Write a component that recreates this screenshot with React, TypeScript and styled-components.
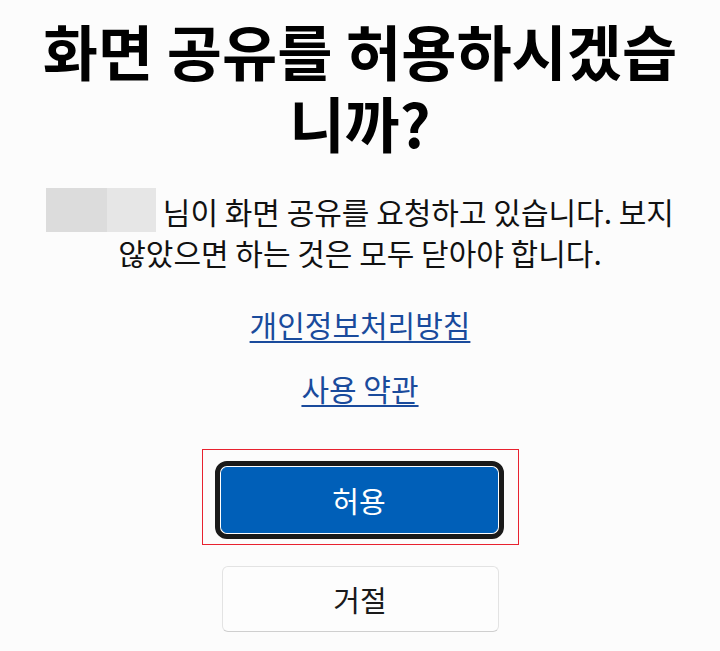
import React from "react";
import styled, { createGlobalStyle } from "styled-components";

const Global = createGlobalStyle`
  html, body { margin: 0; padding: 0; background: #fcfcfc; }
  body { font-family: "Noto Sans CJK KR", "Noto Sans", sans-serif; color: #000; }
`;

const Page = styled.main`
  display: flex;
  flex-direction: column;
  align-items: center;
  padding: 14px 24px 0;
  box-sizing: border-box;
  width: 720px;
`;

const Title = styled.h1`
  margin: 0;
  font-size: 60px;
  font-weight: 700;
  line-height: 72px;
  text-align: center;
  width: 672px;
`;

const Description = styled.p`
  margin: 30px 0 0;
  max-width: 640px;
  font-size: 30px;
  line-height: 40px;
  text-align: center;
  color: #111;
`;

const Placeholder = styled.span`
  display: inline-flex;
  vertical-align: -8px;
`;

const Block = styled.span<{ $w: number; $c: string }>`
  display: inline-block;
  width: ${(p) => p.$w}px;
  height: 44px;
  background: ${(p) => p.$c};
`;

const Links = styled.nav`
  display: flex;
  flex-direction: column;
  align-items: center;
  gap: 24px;
  margin-top: 32px;
`;

const Link = styled.a`
  font-size: 30px;
  line-height: 40px;
  color: #1a4b9c;
  text-decoration: underline;
  text-underline-offset: 4px;
  text-decoration-thickness: 2px;
`;

const Highlight = styled.div`
  margin-top: 41px;
  border: 1px solid #e8222f;
  padding: 11px 14px 5px 12px;
`;

const FocusRing = styled.div`
  border: 5px solid #1a1a1a;
  border-radius: 12px;
  padding: 1px;
  background: #fff;
`;

const Button = styled.button<{ $primary?: boolean }>`
  display: flex;
  align-items: center;
  justify-content: center;
  width: 277px;
  height: 66px;
  box-sizing: border-box;
  border-radius: 6px;
  font-family: "Noto Sans CJK KR", "Noto Sans", sans-serif;
  font-size: 29px;
  cursor: pointer;
  background: ${(p) => (p.$primary ? "#005fb8" : "#fdfdfd")};
  color: ${(p) => (p.$primary ? "#fff" : "#1a1a1a")};
  border: 1px solid ${(p) => (p.$primary ? "#005fb8" : "#e3e3e3")};
  border-bottom-color: ${(p) => (p.$primary ? "#005fb8" : "#cfcfcf")};
`;

const DenyWrap = styled.div`
  margin-top: 21px;
`;

export default function App() {
  return (
    <>
      <Global />
      <Page>
        <Title>화면 공유를 허용하시겠습니까?</Title>
        <Description>
          <Placeholder>
            <Block $w={61} $c="#dcdcdc" />
            <Block $w={49} $c="#e6e6e6" />
          </Placeholder>{" "}
          님이 화면 공유를 요청하고 있습니다. 보지 않았으면 하는 것은 모두 닫아야 합니다.
        </Description>
        <Links>
          <Link href="#">개인정보처리방침</Link>
          <Link href="#">사용 약관</Link>
        </Links>
        <Highlight>
          <FocusRing>
            <Button $primary>허용</Button>
          </FocusRing>
        </Highlight>
        <DenyWrap>
          <Button>거절</Button>
        </DenyWrap>
      </Page>
    </>
  );
}
